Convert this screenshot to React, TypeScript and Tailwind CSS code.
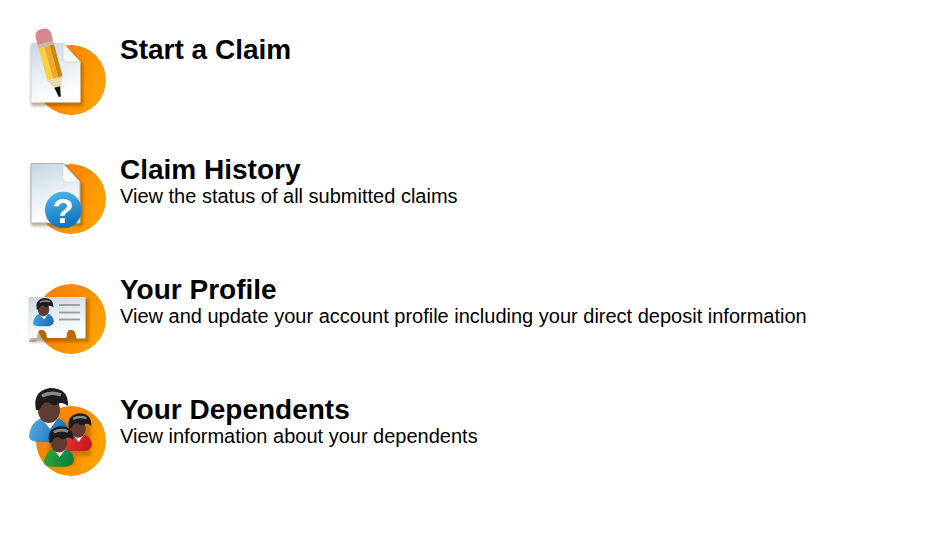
import type { ReactNode } from 'react';

const ITEMS = [
  { id: 'claim', title: 'Start a Claim', desc: '' },
  { id: 'history', title: 'Claim History', desc: 'View the status of all submitted claims' },
  { id: 'profile', title: 'Your Profile', desc: 'View and update your account profile including your direct deposit information' },
  { id: 'dependents', title: 'Your Dependents', desc: 'View information about your dependents' },
];

function Disc({ id, cy }: { id: string; cy: number }) {
  return (
    <>
      <defs>
        <linearGradient id={`${id}-disc`} x1="0" y1="0" x2="1" y2="0.4">
          <stop offset="0" stopColor="#ee8000" />
          <stop offset="0.55" stopColor="#fb8a00" />
          <stop offset="1" stopColor="#ffa000" />
        </linearGradient>
      </defs>
      <circle cx="51" cy={cy} r="35" fill={`url(#${id}-disc)`} />
    </>
  );
}

function Soft({ id, children }: { id: string; children: ReactNode }) {
  return (
    <svg viewBox="0 0 100 120" className="w-[100px] h-[120px] shrink-0 overflow-visible">
      <defs>
        <filter id={`${id}-soft`} x="-10%" y="-10%" width="120%" height="120%">
          <feGaussianBlur stdDeviation="0.7" />
        </filter>
        <filter id={`${id}-shade`} x="-20%" y="-20%" width="140%" height="140%">
          <feGaussianBlur stdDeviation="1.5" />
        </filter>
        <linearGradient id={`${id}-paper`} x1="0" y1="0" x2="0.25" y2="1">
          <stop offset="0" stopColor="#c4d6e2" />
          <stop offset="0.5" stopColor="#e4edf2" />
          <stop offset="1" stopColor="#ffffff" />
        </linearGradient>
      </defs>
      <g filter={`url(#${id}-soft)`}>{children}</g>
    </svg>
  );
}

function ClaimIcon() {
  return (
    <Soft id="claim">
      <Disc id="claim" cy={60} />
      <path d="M11 25H44L63 44V86H11Z" fill="#5a3408" opacity="0.4" filter="url(#claim-shade)" />
      <path d="M11.5 23H43L60.5 42V82.5H11.5Z" fill="url(#claim-paper)" />
      <path d="M43 23L60.5 42H46Q43 42 43 38Z" fill="#f4f7f8" stroke="#b9c5cc" strokeWidth="0.6" />
      <g transform="translate(22.5 12) rotate(-15)">
        <path d="M-8 4Q-8 -3 0 -3Q8 -3 8 4V12H-8Z" fill="#d8888c" />
        <rect x="-8" y="11" width="16" height="4" fill="#c9b8a0" />
        <rect x="-8" y="15" width="6" height="33" fill="#f9d045" />
        <rect x="-2" y="15" width="5.5" height="33" fill="#eeaa20" />
        <rect x="3.5" y="15" width="4.5" height="33" fill="#c98412" />
        <path d="M-8 48H8L2 60H-2Z" fill="#e9d9b0" />
        <path d="M-3 57H3L1 67H-1Z" fill="#111" />
      </g>
    </Soft>
  );
}

function HistoryIcon() {
  return (
    <Soft id="history">
      <Disc id="history" cy={59} />
      <path d="M11 25H45L63 44V86H11Z" fill="#5a3408" opacity="0.4" filter="url(#history-shade)" />
      <path d="M11 23.5H43.5L60 42V83H11Z" fill="url(#history-paper)" stroke="#aab4bc" strokeWidth="1" />
      <path d="M43 24L60 42H46Q43 42 43 38Z" fill="#f7f9fa" stroke="#c5cfd5" strokeWidth="0.5" />
      <defs>
        <linearGradient id="history-ball" x1="0.3" y1="0" x2="0.6" y2="1">
          <stop offset="0" stopColor="#4fb4ea" />
          <stop offset="1" stopColor="#0b6fb8" />
        </linearGradient>
      </defs>
      <circle cx="43.3" cy="70" r="18.3" fill="url(#history-ball)" />
      <text x="43.3" y="83" textAnchor="middle" fill="#fff" className="font-bold text-[35px] font-['Liberation_Sans',sans-serif]">?</text>
    </Soft>
  );
}

function ProfileIcon() {
  return (
    <Soft id="profile">
      <Disc id="profile" cy={59} />
      <path d="M10 39H69V82H10Z" fill="#5a3408" opacity="0.4" filter="url(#profile-shade)" />
      <path
        d="M8.5 37H65.5V78.5H56.5Q55.5 70 52 70H49.5Q47 70 46.5 78H27Q26 70 22.5 70H20Q18 70 17 78H8.5Z"
        fill="url(#profile-paper)"
      />
      <path d="M9 81H16" stroke="#777" strokeWidth="1" />
      <g transform="translate(23.5 49) scale(0.52)">
        <Person id="profile" body="#1d73b8" bodyLight="#4aa1de" />
      </g>
      <g stroke="#9a9a9a" strokeWidth="1.8">
        <path d="M39 45H60" />
        <path d="M39 52.5H60" />
        <path d="M39 59.5H60" />
      </g>
    </Soft>
  );
}

function Person({ id, body, bodyLight }: { id: string; body: string; bodyLight: string }) {
  const grad = `${id}-${body.slice(1)}`;
  return (
    <>
      <defs>
        <linearGradient id={grad} x1="0" y1="0" x2="1" y2="0.3">
          <stop offset="0" stopColor={bodyLight} />
          <stop offset="1" stopColor={body} />
        </linearGradient>
      </defs>
      <path d="M-20 27Q-19 14 -8 9H9Q18 12 20 24Q19 32 8 33H-8Q-20 33 -20 27Z" fill={`url(#${grad})`} />
      <path d="M-8 9L1 20L9 9L6 6H-5Z" fill="#f3f3f3" />
      <ellipse cx="0" cy="1" rx="11" ry="13" fill="#5e3b32" />
      <path
        d="M-13 1Q-17 -18 1 -21Q20 -21 19 -3Q13 -8 9 -5Q4 -2 1 -6Q-4 -8 -7 -4Q-9 2 -13 1Z"
        fill="#1c1c1c"
      />
      <path d="M-7 -13Q2 -18 12 -14" stroke="#8a8a8a" strokeWidth="3.5" fill="none" />
    </>
  );
}

function DependentsIcon() {
  return (
    <Soft id="dependents">
      <Disc id="dependents" cy={61} />
      <path d="M30 44H71V76H55V85H28Z" fill="#5a3408" opacity="0.3" filter="url(#dependents-shade)" />
      <g transform="translate(29 29)">
        <Person id="dependents" body="#1a6db3" bodyLight="#5aaee6" />
      </g>
      <g transform="translate(58 48) scale(0.7)">
        <Person id="dependents" body="#c81820" bodyLight="#ea3a34" />
      </g>
      <g transform="translate(39 62) scale(0.75)">
        <Person id="dependents" body="#12803a" bodyLight="#2bad3f" />
      </g>
    </Soft>
  );
}

const ICONS: Record<string, () => ReactNode> = {
  claim: ClaimIcon,
  history: HistoryIcon,
  profile: ProfileIcon,
  dependents: DependentsIcon,
};

export default function App() {
  return (
    <div className="min-h-[533px] w-[942px] bg-white pt-5 text-black font-['Liberation_Sans',Arial,sans-serif] overflow-hidden">
      {ITEMS.map(item => {
        const Icon = ICONS[item.id];
        return (
          <div key={item.id} className="flex h-[120px] pl-5">
            <Icon />
            <div className="pt-[15px]">
              <h2 className="text-[28px] leading-[30px] font-bold">{item.title}</h2>
              {item.desc && <p className="text-[20px] leading-[23px]">{item.desc}</p>}
            </div>
          </div>
        );
      })}
    </div>
  );
}
